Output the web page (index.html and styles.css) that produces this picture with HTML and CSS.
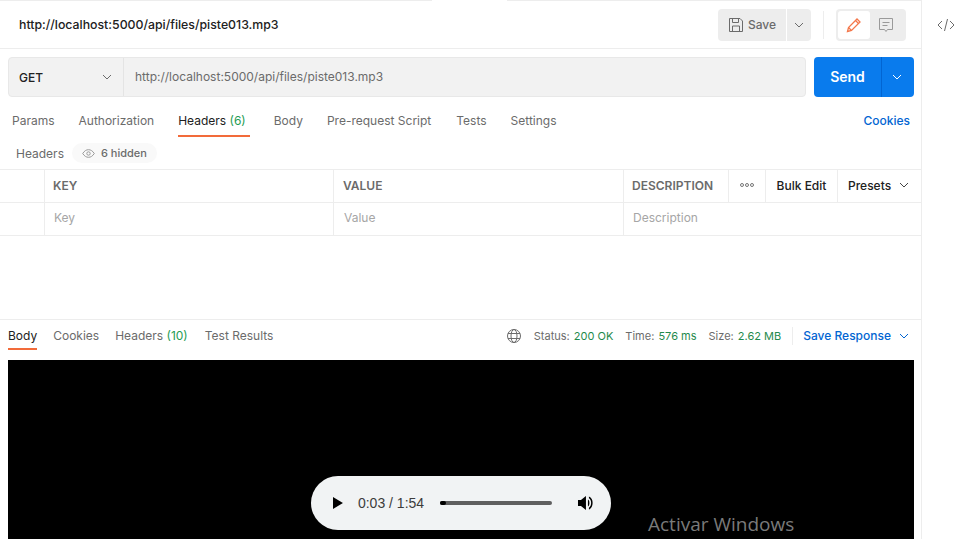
FILE: index.html
```html
<!DOCTYPE html>
<html>
<head>
  <meta charset="UTF-8">
  <title>Postman</title>
  <link rel="stylesheet" href="styles.css">
</head>
<body>
  <div class="app">
    <main class="main">
      <!-- Request title -->
      <div class="title-row">
        <span class="tab-notch"></span>
        <span class="req-name">http://localhost:5000/api/files/piste013.mp3</span>
        <div class="title-actions">
          <div class="save-group">
            <button class="save-btn">
              <svg width="16" height="16" viewBox="0 0 16 16" fill="none" stroke="#6b6b6b" stroke-width="1"><path d="M1.500 1.500h10.500l2.500 2.500v10.500h-13z"/><path d="M4.500 1.500v4h6v-4M4.500 14.500v-5.500h7v5.500"/></svg>
              Save
            </button>
            <button class="save-more">
              <svg width="10" height="6" viewBox="0 0 10 6" fill="none" stroke="#6b6b6b"><path d="M1 1l4 4 4-4"/></svg>
            </button>
          </div>
          <span class="divider"></span>
          <div class="mode-switch">
            <span class="mode mode-on">
              <svg width="16" height="16" viewBox="0 0 16 16" fill="none" stroke="#f4774a" stroke-width="1.300"><path d="M1.500 14.500l1-4 8.500-8.500 3 3-8.500 8.500z"/><path d="M9.500 3.500l3 3M2.500 10.500l3 3"/></svg>
            </span>
            <span class="mode">
              <svg width="16" height="16" viewBox="0 0 16 16" fill="none" stroke="#9a9a9a" stroke-width="1"><path d="M1.500 1.500h13v11h-5l-1.500 2-1.500-2h-5z"/><path d="M4.500 5.500h7M4.500 8.500h5"/></svg>
            </span>
          </div>
        </div>
      </div>

      <!-- URL bar -->
      <div class="url-row">
        <div class="url-box">
          <div class="method">
            <span>GET</span>
            <svg width="10" height="6" viewBox="0 0 10 6" fill="none" stroke="#6b6b6b"><path d="M1 1l4 4 4-4"/></svg>
          </div>
          <div class="url-text">http://localhost:5000/api/files/piste013.mp3</div>
        </div>
        <div class="send">
          <span class="send-label">Send</span>
          <span class="send-more">
            <svg width="10" height="6" viewBox="0 0 10 6" fill="none" stroke="#fff"><path d="M1 1l4 4 4-4"/></svg>
          </span>
        </div>
      </div>

      <!-- Request tabs -->
      <div class="req-tabs">
        <span class="tab">Params</span>
        <span class="tab">Authorization</span>
        <span class="tab tab-active">Headers <em>(6)</em></span>
        <span class="tab">Body</span>
        <span class="tab tab-pad">Pre-request Script</span>
        <span class="tab">Tests</span>
        <span class="tab">Settings</span>
        <span class="cookies-link">Cookies</span>
      </div>

      <div class="headers-line">
        <span>Headers</span>
        <span class="hidden-pill">
          <svg width="13" height="9" viewBox="0 0 13 9" fill="none" stroke="#9a9a9a"><path d="M.7 4.500C2.500 1.800 4.300.7 6.500.7s4 1.100 5.800 3.800C10.500 7.200 8.700 8.300 6.500 8.300S2.500 7.200.7 4.500z"/><circle cx="6.500" cy="4.500" r="1.700"/></svg>
          6 hidden
        </span>
      </div>

      <!-- Headers table -->
      <div class="table">
        <div class="row row-head">
          <div class="cell c-check"></div>
          <div class="cell c-key">KEY</div>
          <div class="cell c-value">VALUE</div>
          <div class="cell c-desc">DESCRIPTION</div>
          <div class="cell c-dots">
            <svg width="14" height="4" viewBox="0 0 14 4" fill="none" stroke="#555" stroke-width=".8"><circle cx="2" cy="2" r="1.500"/><circle cx="7" cy="2" r="1.500"/><circle cx="12" cy="2" r="1.500"/></svg>
          </div>
          <div class="cell c-bulk">Bulk Edit</div>
          <div class="cell c-presets">
            Presets
            <svg width="10" height="6" viewBox="0 0 10 6" fill="none" stroke="#444"><path d="M1 1l4 4 4-4"/></svg>
          </div>
        </div>
        <div class="row row-empty">
          <div class="cell c-check"></div>
          <div class="cell c-key">Key</div>
          <div class="cell c-value">Value</div>
          <div class="cell c-rest">Description</div>
        </div>
      </div>

      <div class="spacer"></div>

      <!-- Response -->
      <div class="res-bar">
        <div class="res-tabs">
          <span class="tab tab-active">Body</span>
          <span class="tab">Cookies</span>
          <span class="tab tab-pad">Headers <em>(10)</em></span>
          <span class="tab">Test Results</span>
        </div>
        <div class="res-meta">
          <svg class="globe" width="16" height="16" viewBox="0 0 16 16" fill="none" stroke="#6b6b6b"><circle cx="8" cy="8" r="6.500"/><ellipse cx="8" cy="8" rx="3" ry="6.500"/><path d="M2 5.500h12M2 10.500h12"/></svg>
          <span class="stat">Status: <b>200 OK</b></span>
          <span class="stat">Time: <b>576 ms</b></span>
          <span class="stat stat-last">Size: <b>2.62 MB</b></span>
          <span class="save-res">
            Save Response
            <svg width="10" height="6" viewBox="0 0 10 6" fill="none" stroke="#0265d2"><path d="M1 1l4 4 4-4"/></svg>
          </span>
        </div>
      </div>

      <div class="player-area">
        <div class="audio">
          <svg width="12" height="14" viewBox="0 0 12 14" fill="#000"><path d="M1 1l10 6-10 6z"/></svg>
          <span class="audio-time">0:03 / 1:54</span>
          <div class="audio-track"><span class="audio-pos"></span></div>
          <svg width="18" height="16" viewBox="0 0 18 16" fill="#000"><path d="M1 5h3l5-4v14l-5-4H1z"/><path d="M11 4.500c2 .8 2 6.200 0 7z"/><path d="M12 1.500c5 1.500 5 11.500 0 13v-1.800c3-1.500 3-7.900 0-9.400z"/></svg>
        </div>
      </div>
    </main>

    <aside class="side">
      <svg width="18" height="14" viewBox="0 0 18 14" fill="none" stroke="#6b6b6b"><path d="M5 3L1 7l4 4M13 3l4 4-4 4M10.500 1l-3 12"/></svg>
    </aside>
  </div>
  <div class="watermark">Activar Windows</div>
</body>
</html>
```

FILE: styles.css
```css
* {
  margin: 0;
  padding: 0;
  box-sizing: border-box;
}
html, body {
  height: 539px;
  overflow: hidden;
}
body {
  font-family: 'Inter', sans-serif;
  font-size: 12px;
  color: #6b6b6b;
  background: #fff;
}
button {
  font-family: inherit;
  border: none;
}
em {
  font-style: normal;
  color: #1f9d55;
}
.app {
  display: flex;
  height: 539px;
}
.main {
  width: 922px;
  border-right: 1px solid #ededed;
  display: flex;
  flex-direction: column;
}
.side {
  flex: 1;
  display: flex;
  justify-content: center;
  padding: 18px 0 0 10px;
}

/* title row */
.title-row {
  position: relative;
  height: 49px;
  display: flex;
  align-items: center;
  justify-content: space-between;
  padding: 0 15px 0 19px;
  border-top: 1px solid #ededed;
  border-bottom: 1px solid #ededed;
}
.tab-notch {
  position: absolute;
  top: -1px;
  left: 432px;
  width: 75px;
  height: 1px;
  background: #fff;
}
.req-name {
  font-size: 12.3px;
  font-weight: 500;
  color: #212121;
}
.title-actions {
  display: flex;
  align-items: center;
}
.save-group {
  display: flex;
  gap: 1px;
}
.save-btn {
  height: 32px;
  width: 68px;
  display: flex;
  align-items: center;
  justify-content: center;
  gap: 4px;
  background: #ededed;
  color: #6b6b6b;
  font-size: 12px;
  font-weight: 500;
  border-radius: 4px 0 0 4px;
}
.save-more {
  height: 32px;
  width: 24px;
  display: flex;
  align-items: center;
  justify-content: center;
  background: #ededed;
  border-radius: 0 4px 4px 0;
}
.divider {
  width: 1px;
  height: 28px;
  background: #ededed;
  margin: 0 12px;
}
.mode-switch {
  display: flex;
  height: 32px;
  width: 70px;
  padding: 2px 4px 2px 2px;
  background: #ededed;
  border-radius: 4px;
}
.mode {
  flex: 1;
  display: flex;
  align-items: center;
  justify-content: center;
}
.mode-on {
  background: #fff;
  border-radius: 3px;
}

/* url row */
.url-row {
  display: flex;
  gap: 8px;
  padding: 8px 7px 0 8px;
}
.url-box {
  flex: 1;
  height: 40px;
  display: flex;
  background: #f2f2f2;
  border: 1px solid #e8e8e8;
  border-radius: 4px;
}
.method {
  width: 115px;
  display: flex;
  align-items: center;
  justify-content: space-between;
  padding: 0 11px 0 10px;
  border-right: 1px solid #e4e4e4;
  color: #212121;
  font-weight: 500;
}
.url-text {
  padding-left: 11px;
  line-height: 37px;
  color: #6b6b6b;
}
.send {
  width: 100px;
  height: 40px;
  display: flex;
  background: #097bed;
  border-radius: 4px;
  color: #fff;
}
.send-label {
  flex: 1;
  text-align: center;
  line-height: 40px;
  font-size: 14px;
  font-weight: 600;
}
.send-more {
  width: 33px;
  display: flex;
  align-items: center;
  justify-content: center;
  padding-right: 2px;
  border-left: 1px solid #0265d2;
}

/* tabs */
.req-tabs {
  height: 40px;
  display: flex;
  gap: 24px;
  padding: 6px 11px 0 12px;
  align-items: center;
}
.tab {
  position: relative;
  white-space: nowrap;
}
.tab-active {
  color: #212121;
}
.tab-pad {
  margin-right: 1px;
}
.req-tabs .tab-active {
  padding-right: 4px;
}
.req-tabs .tab-active::after {
  content: "";
  position: absolute;
  left: 0;
  right: 0;
  bottom: -9px;
  height: 2px;
  background: #f26b3a;
}
.cookies-link {
  margin-left: auto;
  color: #0265d2;
  font-weight: 500;
}
.headers-line {
  height: 32px;
  display: flex;
  align-items: center;
  gap: 8px;
  padding-left: 16px;
}
.hidden-pill {
  display: flex;
  align-items: center;
  gap: 6px;
  height: 20px;
  padding: 0 10px;
  background: #f9f9f9;
  border-radius: 10px;
  font-size: 11px;
  font-weight: 500;
}

/* table */
.table {
  border-top: 1px solid #ededed;
}
.row {
  height: 33px;
  display: flex;
  border-bottom: 1px solid #ededed;
}
.cell {
  display: flex;
  align-items: center;
  border-right: 1px solid #ededed;
  padding: 0 8px;
}
.cell:last-child {
  border-right: none;
}
.c-check { width: 45px; }
.c-key { width: 289px; }
.c-value { width: 290px; }
.c-desc { width: 105px; }
.c-dots { width: 37px; justify-content: center; padding: 0; }
.c-bulk { width: 72px; justify-content: center; padding: 0; color: #212121; font-weight: 500; }
.c-presets { flex: 1; justify-content: space-between; padding: 0 12px 0 10px; color: #212121; font-weight: 500; }
.c-rest { flex: 1; }
.row-head .cell { padding-bottom: 2px; }
.row-head .c-key, .row-head .c-value, .row-head .c-desc { font-weight: 600; }
.row-head .c-value { padding-left: 9px; }
.row-empty .cell { color: #a6a6a6; padding: 0 9px 3px; }
.row-empty .c-value { padding-left: 10px; }
.spacer { height: 83px; }

/* response */
.res-bar {
  height: 41px;
  display: flex;
  justify-content: space-between;
  align-items: center;
  padding: 0 12px 9px 8px;
  border-top: 1px solid #ededed;
}
.res-tabs {
  display: flex;
  gap: 16px;
}
.res-tabs .tab-active::after {
  content: "";
  position: absolute;
  left: 0;
  right: 0;
  bottom: -7px;
  height: 2px;
  background: #f26b3a;
}
.res-meta {
  display: flex;
  align-items: center;
  font-size: 11px;
}
.globe {
  margin-right: 12px;
}
.stat {
  margin-right: 12px;
}
.stat-last {
  margin-right: 11px;
}
.stat b {
  font-weight: 400;
  color: #1f8a4c;
  margin-left: 1px;
}
.save-res {
  display: flex;
  align-items: center;
  gap: 8px;
  padding-left: 10px;
  border-left: 1px solid #ededed;
  color: #0265d2;
  font-size: 12px;
  font-weight: 500;
  height: 18px;
}

/* player */
.player-area {
  flex: 1;
  margin: 0 7px 0 8px;
  background: #000;
  padding-top: 116px;
  display: flex;
  justify-content: center;
  align-items: flex-start;
}
.audio {
  width: 300px;
  height: 54px;
  flex: none;
  display: flex;
  align-items: center;
  padding: 0 16px 0 21px;
  background: #f1f3f4;
  border-radius: 27px;
}
.audio-time {
  margin-left: 14px;
  font-family: 'Liberation Sans', sans-serif;
  font-size: 14px;
  color: #3c3c3c;
  white-space: nowrap;
}
.audio-track {
  flex: none;
  width: 112px;
  height: 4px;
  margin: 0 25px 0 16px;
  background: #5f5f5f;
  border-radius: 2px;
}
.audio-pos {
  display: block;
  width: 6px;
  height: 4px;
  background: #000;
  border-radius: 2px;
}

.watermark {
  position: absolute;
  left: 648px;
  top: 511px;
  font-family: 'Open Sans', sans-serif;
  font-size: 19px;
  color: #7a7a7a;
}
```
